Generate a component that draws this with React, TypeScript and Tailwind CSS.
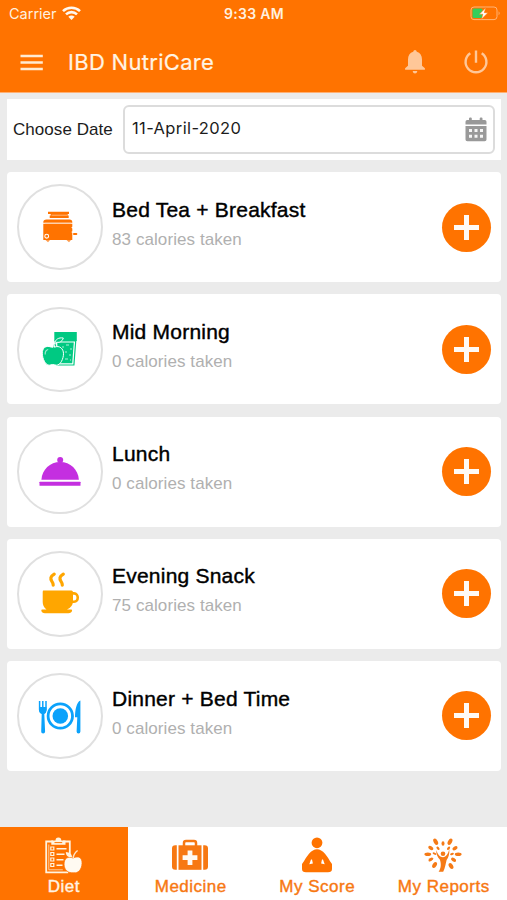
/**
 * App.tsx — IBD NutriCare daily diet screen
 */
import React from 'react';

function ToasterIcon() {
  return (
    <svg width="46" height="46" viewBox="0 0 46 46" fill="#ff7300">
      <path d="M11 7.7h21v2.2h-1.3v1.6h1v2.6h-19v-2.6h1V9.9H11z" />
      <path d="M14.5 11.2h16" stroke="#ffc799" strokeWidth=".8" />
      <path d="M9.5 15.6h23q2.8 0 2.8 2.6v.6H6.3v-.6q0-2.6 3.2-2.6z" />
      <path d="M6.3 19.8h29v3l-1 .8 1 1v2.6l-1 .9 1 1v7h-29z" />
      <path d="M8 19.2h26" stroke="#ffc799" strokeWidth=".8" />
      <circle cx="9.7" cy="32.2" r="1.9" stroke="#fff" strokeWidth="1.1" />
      <rect x="36" y="29" width="4.3" height="2" rx=".9" />
      <path d="M8.5 36h4.5l-2 2.2zM29.5 36H34l-2 2.2z" fill="#ff9c4d" />
    </svg>
  );
}

function JuiceIcon() {
  return (
    <svg width="46" height="46" viewBox="0 0 46 46" fill="#00c982">
      <path d="M17.3 6h22.5v9H17.3z" />
      <path d="M18.2 15l1.7 24h17l1.8-24z" fill="#fff" stroke="#00c982" strokeWidth="1.2" />
      <path d="M20.2 16.5l1.2 20.8h13.8l1.6-20.8z" />
      <path d="M29 19h3M33 23h2M28 26h2M32 29h2M28 33h3M25 21h2M33 34h1" stroke="#a8f0d5" strokeWidth="1.2" />
      <path
        d="M14 21c-5.5-2-8.7 1.3-8.7 6.2 0 5.5 3.2 12 6.9 12 1.6 0 2-.6 3.5-.6s2.2.6 3.8.6c4 0 7-6.5 7-11.5 0-5-4-8.7-9-6.5 0-2.5.3-3.5 2-5 4 .7 6-1.5 6.8-4.2-4.7-.7-8 1.4-8.4 5.2-1.5 1-1.8 2-1.8 4z"
        stroke="#fff"
        strokeWidth="1"
      />
      <path d="M8.2 28.5c-.2-2.8.7-4.5 3-5" fill="none" stroke="#9becce" strokeWidth="1.2" />
    </svg>
  );
}

function ClocheIcon() {
  return (
    <svg width="46" height="46" viewBox="0 0 46 46" fill="#c42fe0">
      <circle cx="23.2" cy="11" r="3" />
      <path d="M4.4 30.8C5 20.5 13 13 23.2 13S41.2 20.5 41.9 30.8z" />
      <rect x="2.5" y="32.8" width="41" height="4" rx=".4" />
    </svg>
  );
}

function CupIcon() {
  return (
    <svg width="46" height="46" viewBox="0 0 46 46" fill="#ffa600">
      <g fill="none" stroke="#ffa600" strokeWidth="3.2" strokeLinecap="round">
        <path d="M17.2 3.2c-4 2.5-4 4.5-2.3 7.2 1 1.5 1.4 2.5 1.3 3.8" />
        <path d="M26.3 3.2c-4 2.5-4 4.5-2.3 7.2 1 1.5 1.4 2.5 1.3 3.8" />
        <path d="M34.5 22.4H37c5 0 5 8.4 0 8.4h-5" strokeWidth="2.6" />
      </g>
      <path d="M6.2 19.6h28.2q1.6 0 1.6 1.6v8.4q0 6.6-6 8.9h4.2q1 0 .9 1-.5 2.8-3.7 2.8H8q-3.2 0-3.7-2.8-.1-1 .9-1h4.3q-3.8-2.6-3.8-7.5V21.2q0-1.6.5-1.6z" />
    </svg>
  );
}

function PlateIcon() {
  return (
    <svg width="46" height="46" viewBox="0 0 46 46" fill="#0ba2fb">
      <circle cx="23.3" cy="23" r="12.2" fill="none" stroke="#0ba2fb" strokeWidth="2.8" />
      <circle cx="23.3" cy="23" r="7.8" />
      <path d="M2.6 8v8.5q0 3.3 3.1 3.3t3.3-3.3V8M5.8 8v9" fill="none" stroke="#0ba2fb" strokeWidth="1.5" />
      <path d="M2.2 14h7.2v3q0 3-2.1 4l.8 17.4q0 2-2 2t-1.9-2L4.7 21Q2.2 20 2.2 17z" />
      <path d="M43.4 7.4v31q0 2-1.9 2t-1.9-2l.7-14.2H38C38 16.8 39.6 8.8 43.4 7.4z" />
    </svg>
  );
}

function DietIcon() {
  return (
    <svg width="40" height="38" viewBox="0 0 40 38">
      <g fill="none" stroke="#fff3df">
        <path d="M10 4.5H3.2V35.4h22M20 4.5h6.8v14" strokeWidth="1.8" />
        <path d="M5.8 7.5v25.3h14" strokeWidth=".7" />
        <path d="M13.5 11.8h10M13.5 17.2h8M13.5 22.7h7M13.5 28.2h6" strokeWidth="1.4" />
        <path d="M7.8 10h3v3h-3zM7.8 15.5h3v3h-3zM7.8 21h3v3h-3zM7.8 26.5h3v3h-3z" strokeWidth="1.2" />
      </g>
      <path d="M8.3 3.6h4.2q0-3 2.9-3t2.9 3h4.2v4.2H8.3z" fill="#fff3df" />
      <path d="M11.5 5.6h7.7" stroke="#ff7300" strokeWidth="1" />
      <path
        d="M30 21c6-2.7 9.3 0 9 5.5-.3 6-3.8 10-8.3 9.2-5.5.8-9.6-2.8-9.6-8.4 0-6.4 4-8.2 8.9-6.3z"
        fill="#fffaf2"
        stroke="#ff7300"
        strokeWidth=".7"
      />
      <path d="M30.2 21c.3-3.5 1.8-5.5 4.4-7.5" fill="none" stroke="#ffe3c6" strokeWidth="1.5" />
      <path d="M29 20.3c-4 .3-6.2-1.6-6.2-5.3 3.8.2 6.2 2 6.2 5.3z" fill="#fff3df" />
    </svg>
  );
}

function MedicineIcon() {
  return (
    <svg width="40" height="38" viewBox="0 0 40 38" fill="#f77812">
      <path d="M14 9V6q0-2 2-2h8q2 0 2 2v3" fill="none" stroke="#f77812" strokeWidth="2.5" />
      <path d="M6.8 8.3v24.5H5.3Q2 32.8 2 29.5v-18q0-3.2 3.3-3.2zM33.2 8.3v24.5h1.5q3.3 0 3.3-3.3v-18q0-3.2-3.3-3.2z" />
      <rect x="8.5" y="8.3" width="23" height="24.5" />
      <path d="M17.6 13.4h4.8v4.9h5v4.8h-5V28h-4.8v-4.9h-5v-4.8h5z" fill="#fffaf3" />
    </svg>
  );
}

function ScoreIcon() {
  return (
    <svg width="40" height="38" viewBox="0 0 40 38" fill="#ff7300">
      <circle cx="20" cy="5.8" r="5.4" />
      <path d="M20 12.2q4.2 0 8 4.5c2.9 3.4 4 6.2 7 10.2V32q0 3.3-4 3.3H9q-4 0-4-3.3v-5.1c3-4 4.1-6.8 7-10.2q3.8-4.5 8-4.5z" />
      <path d="M14 22.6h1l.9 4-3.6.7zM26 22.6h-1l-.9 4 3.6.7z" fill="#fff" />
    </svg>
  );
}

function ReportsIcon() {
  // [x, y, rotation, rx, ry] for each leaf around the figure
  const leaves = [
    [12.7, 4.7, -30, 2, 3.4], [20, 6.5, 0, 1.5, 2.3], [27, 4.7, 30, 2, 3.4],
    [7.8, 11, -58, 1.8, 2.8], [32, 11.2, 58, 1.8, 2.8], [4.8, 17.2, 90, 1.8, 3.4],
    [35.2, 17.2, 90, 1.8, 3.4], [7.8, 22.6, 58, 1.5, 2.6], [30.6, 22.8, -58, 1.7, 2.8],
    [11.6, 28, 30, 2, 3.3], [28, 29, -30, 2, 3.3], [15, 11.3, -38, 1.2, 2],
    [25.6, 11.3, 38, 1.2, 2], [11.5, 16.6, -65, 1, 2], [29, 17, 65, 1, 2],
  ];
  return (
    <svg width="40" height="38" viewBox="0 0 40 38" fill="#f57a16">
      {leaves.map(([x, y, a, rx, ry]) => (
        <ellipse key={`${x}-${y}`} cx={x} cy={y} rx={rx} ry={ry} transform={`rotate(${a} ${x} ${y})`} />
      ))}
      <circle cx="20" cy="16.7" r="2.3" />
      <path d="M13.2 13c1.8 5.2 4 7 6.8 7.2 3-.2 5.4-3.4 6.3-8.4.4 5.4-.8 8.8-2.7 11.2-1 4-1.5 8.3-3.4 11.7h-4.6c3-4 2.5-9 1.2-12.2-2.2-2.2-3.7-5.2-3.6-9.5z" />
    </svg>
  );
}

function CalendarIcon() {
  return (
    <svg width="22" height="25" viewBox="0 0 22 25">
      <path d="M2.2 3H4V1.5q0-1 1.2-1h.5q1.1 0 1.1 1V3h7.9V1.5q0-1 1.2-1h.5q1.1 0 1.1 1V3h2.3q1.7 0 1.7 1.8v2.8H.5V4.8Q.5 3 2.2 3zM.5 9h21v13.5q0 1.8-1.8 1.8H2.3q-1.8 0-1.8-1.8z" fill="#999" />
      <path d="M4 12h3v3H4zM9.5 12h3v3h-3zM15 12h3v3h-3zM4 17.7h3v3H4zM9.5 17.7h3v3h-3zM15 17.7h3v3h-3z" fill="#f5f5f5" />
    </svg>
  );
}

const MEALS = [
  { title: 'Bed Tea + Breakfast', calories: 83, icon: <ToasterIcon /> },
  { title: 'Mid Morning', calories: 0, icon: <JuiceIcon /> },
  { title: 'Lunch', calories: 0, icon: <ClocheIcon /> },
  { title: 'Evening Snack', calories: 75, icon: <CupIcon /> },
  { title: 'Dinner + Bed Time', calories: 0, icon: <PlateIcon /> },
];

const TABS = [
  { label: 'Diet', icon: <DietIcon /> },
  { label: 'Medicine', icon: <MedicineIcon /> },
  { label: 'My Score', icon: <ScoreIcon /> },
  { label: 'My Reports', icon: <ReportsIcon /> },
];

function StatusBar() {
  return (
    <div className="grid grid-cols-3 items-center h-[27px] pl-[9px] pr-[6px] text-[#fff0df] font-['Inter',sans-serif]">
      <div className="flex items-center gap-[5px] text-[14.5px]">
        <span>Carrier</span>
        <svg width="19" height="15" viewBox="0 0 19 15" fill="none" stroke="#fff8ef" strokeWidth="2.6">
          <path d="M1 5.1C5.7.6 13.3.6 18 5.1M4 8.4c3.1-3 7.9-3 11 0" />
          <path d="M6.3 10.7q3.2-2.5 6.4 0L9.5 14z" fill="#fff8ef" stroke="none" />
        </svg>
      </div>
      <span className="-ml-[2px] text-center text-[14px] font-semibold tracking-[0.3px] whitespace-nowrap">9:33 AM</span>
      <svg className="justify-self-end" width="31" height="15" viewBox="0 0 31 15">
        <rect x="1" y="1" width="26" height="12.6" rx="3" fill="none" stroke="#ffb477" strokeWidth="1" />
        <rect x="2.5" y="2.5" width="10" height="9.6" rx="1.5" fill="#35ce5b" />
        <path d="M28.6 5.3q2 2 0 4z" fill="#ffb477" />
        <path d="M15.8 1.8L9.3 8.2h3.6l-1.5 5 6.5-6.5h-3.7z" fill="#fff" stroke="#ff7300" strokeWidth=".5" />
      </svg>
    </div>
  );
}

function NavBar() {
  return (
    <div className="flex items-center h-[64px] pt-[6px] pl-5 pr-[18px]">
      <svg width="24" height="17" viewBox="0 0 24 17" stroke="#ffebd2" strokeWidth="2.5">
        <path d="M.5 2h22.3M.5 8.5h22.3M.5 15h22.3" />
      </svg>
      <h1 className="ml-6 text-[22px] leading-7 tracking-[0.3px] text-[#fff3e3] font-['Inter',sans-serif] [-webkit-text-stroke:0.2px_#fff3e3]">
        IBD NutriCare
      </h1>
      <svg className="ml-auto" width="22" height="26" viewBox="0 0 22 26" fill="#ffc798">
        <path d="M11 1q1.5 0 1.8 1.8c3.4 1 5.2 3.8 5.2 7.7v6.3l2.9 2.5v1.4H1.1v-1.4L4 16.8v-6.3c0-3.9 1.8-6.7 5.2-7.7Q9.5 1 11 1zM8.6 22h4.8q-.5 2.6-2.4 2.6T8.6 22z" />
      </svg>
      <svg className="ml-[37px]" width="26" height="26" viewBox="0 0 26 26" fill="none" stroke="#ffc798" strokeWidth="2.4">
        <path d="M13 1.5v12.3M7.3 4.2a10.4 10.4 0 1 0 11.4 0" />
      </svg>
    </div>
  );
}

export default function App() {
  return (
    <div className="w-full h-[900px] flex flex-col overflow-hidden bg-[#ebebeb] font-['Liberation_Sans',Arial,sans-serif]">
      <header className="shrink-0 bg-[#ff7300] h-[93px] border-b border-[#ffb073]">
        <StatusBar />
        <NavBar />
      </header>

      <main className="flex-1 flex flex-col gap-[12.2px] pt-[6px] pl-[7px] pr-[6px]">
        {/* Date picker */}
        <div className="shrink-0 flex items-center h-[61px] bg-white pl-[6px] pr-[6px]">
          <span className="w-[110px] shrink-0 text-[17px] tracking-[0.05px] text-[#1c1c1c]">Choose Date</span>
          <div className="flex-1 flex items-center justify-between h-[49px] rounded-md border-2 border-[#dcdcdc] pl-[7px] pr-[6px]">
            <span className="pb-[2px] text-[16.5px] tracking-[0.38px] text-[#1c1c1c] font-['Inter',sans-serif]">11-April-2020</span>
            <CalendarIcon />
          </div>
        </div>

        {/* Meals */}
        {MEALS.map(m => (
          <section key={m.title} className="shrink-0 flex items-center h-[110px] bg-white rounded-[4px] pl-[10px] pr-[10px]">
            <div className="w-[85.5px] h-[85.5px] shrink-0 rounded-full border-2 border-[#e0e0e0] flex items-center justify-center">
              {m.icon}
            </div>
            <div className="ml-[9.5px] -mt-[3.6px] flex-1">
              <h2 className="text-[21px] leading-[29px] tracking-[0.22px] text-black [-webkit-text-stroke:0.4px_#000]">{m.title}</h2>
              <p className="text-[17px] leading-[32px] tracking-[0.08px] text-[#b0b0b0]">{m.calories} calories taken</p>
            </div>
            <button className="w-[49px] h-[49px] rounded-full bg-[#ff7300] flex items-center justify-center">
              <svg width="25" height="25" viewBox="0 0 25 25" stroke="#fffaf5" strokeWidth="5">
                <path d="M12.5 0v25M0 12.5h25" />
              </svg>
            </button>
          </section>
        ))}
      </main>

      {/* Bottom tabs */}
      <nav className="shrink-0 h-[73.5px] grid grid-cols-[127.5px_1fr_1fr_1fr] bg-white">
        {TABS.map((t, i) => (
          <button
            key={t.label}
            className={`flex flex-col items-center pt-[10px] ${i === 0 ? 'bg-[#ff7300] text-[#fff3e3] [-webkit-text-stroke:0.4px_#fff3e3]' : 'text-[#f77812] [-webkit-text-stroke:0.4px_#f77812]'}`}
          >
            <span className="-ml-[1px]">{t.icon}</span>
            <span className="mt-[2px] text-[17px] leading-5 tracking-[0.5px] whitespace-nowrap">{t.label}</span>
          </button>
        ))}
      </nav>
    </div>
  );
}
